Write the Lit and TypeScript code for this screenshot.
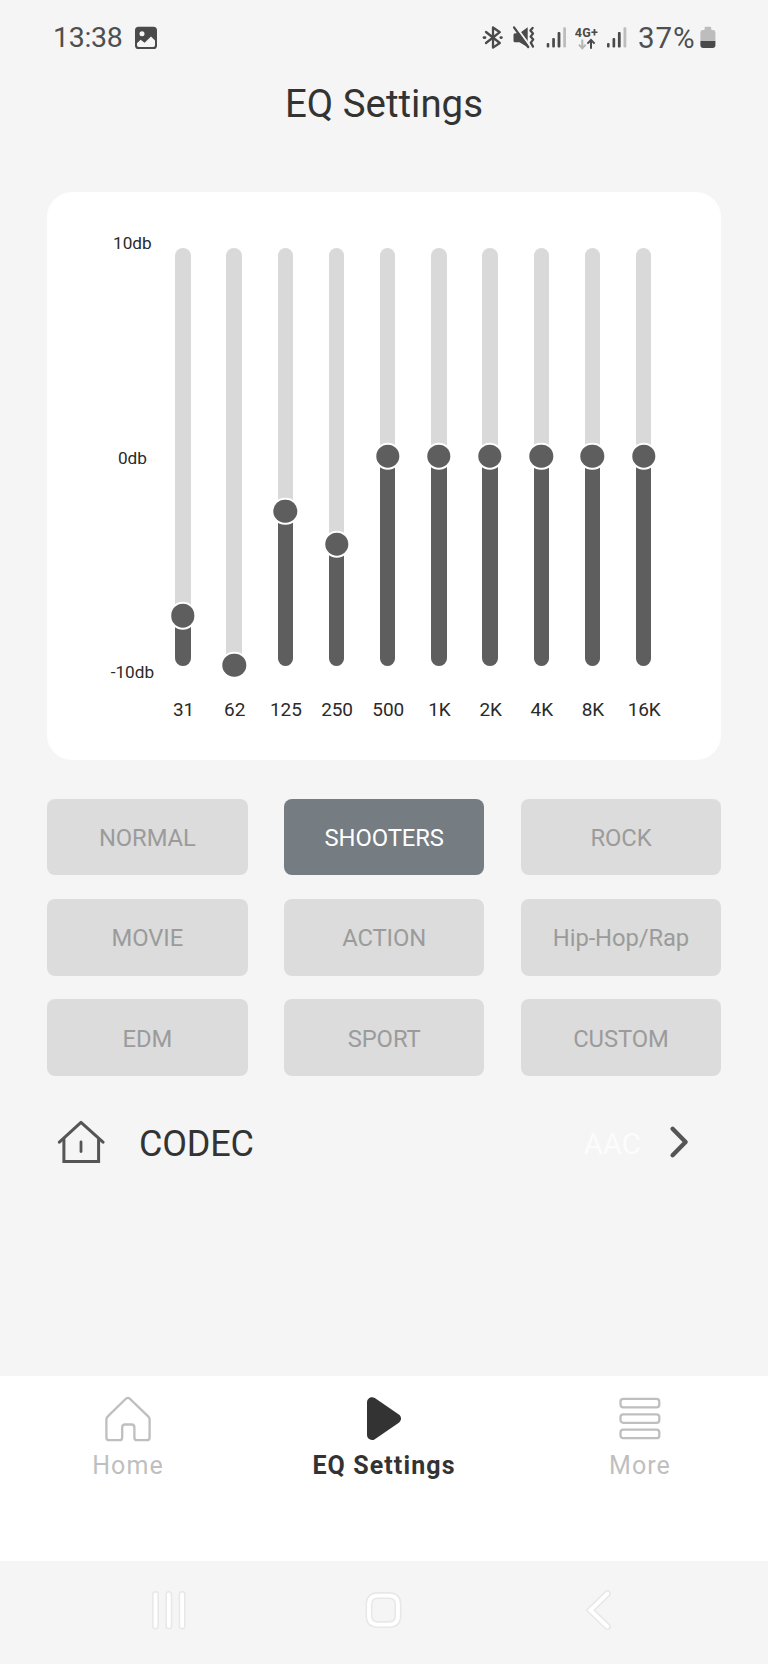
import { LitElement, html, css, svg } from "lit";
import { customElement, property } from "lit/decorators.js";
import { classMap } from "lit/directives/class-map.js";

interface Band {
  label: string;
  /** Share of the track that is filled, in percent. */
  level: number;
}

const BANDS: Band[] = [
  { label: "31", level: 12 },
  { label: "62", level: 0.1 },
  { label: "125", level: 37 },
  { label: "250", level: 29 },
  ...["500", "1K", "2K", "4K", "8K", "16K"].map((label) => ({ label, level: 50.15 })),
];

const PRESETS = ["NORMAL", "SHOOTERS", "ROCK", "MOVIE", "ACTION", "Hip-Hop/Rap", "EDM", "SPORT", "CUSTOM"];

@customElement("status-bar")
export class StatusBar extends LitElement {
  static styles = css`
    :host {
      display: flex;
      align-items: center;
      height: 76px;
      padding: 0 52px 0 53px;
      color: #4f4f4f;
      font-size: 28.5px;
      line-height: 30px;
    }
    .time { width: 82px; letter-spacing: -0.3px; }
    .spacer { flex: 1; }
    .percent { width: 62px; white-space: nowrap; font-size: 29.5px; letter-spacing: 0.9px; }
    svg { display: block; flex: none; }
    .net { font: 700 12.5px Roboto, sans-serif; }
  `;

  private signal(x: number) {
    return html`<svg width=${x ? 30 : 31} height="30" fill="#4a4a4a">
      <rect x=${x} y="20" width="2.6" height="4.6" rx="1"></rect>
      <rect x=${x + 5.5} y="15" width="2.7" height="9.6" rx="1"></rect>
      <rect x=${x + 10.9} y="9" width="2.8" height="15.6" rx="1"></rect>
      <rect x=${x + 16.5} y="4.3" width="2.8" height="20.3" rx="1" fill="#bdbdbd"></rect>
    </svg>`;
  }

  render() {
    return html`
      <span class="time">13:38</span>
      <svg width="22" height="30">
        <rect x="0" y="3.7" width="22" height="22.3" rx="3.6" fill="#4a4a4a"></rect>
        <circle cx="7" cy="10.8" r="2.5" fill="#f5f5f5"></circle>
        <path d="M2 20.2L5.6 16.8L9.6 19.8L16 13.6L20 17.4V22.2Q20 24 18.2 24H3.8Q2 24 2 22.2Z" fill="#f5f5f5"></path>
      </svg>
      <span class="spacer"></span>
      <svg width="31" height="30" fill="none" stroke="#4a4a4a" stroke-width="2.3" stroke-linejoin="round" stroke-linecap="round">
        <path d="M4 9L17.8 20L11 24.6V4.5L17.8 9.2L4 20"></path>
        <path d="M2 14.6h1M18.8 14.6h0.6" stroke-width="2.8"></path>
      </svg>
      <svg width="32" height="30">
        <path d="M0.5 11.8Q0.5 10.3 2 10.3H6.5L14.7 4.3V24.3L6.5 19.2H2Q0.5 19.2 0.5 17.7Z" fill="#4a4a4a"></path>
        <path d="M2.6 3.4L17 22.8" stroke="#f5f5f5" stroke-width="2"></path>
        <path d="M1 4.4L15.2 24" stroke="#4a4a4a" stroke-width="2.3" stroke-linecap="round"></path>
        <path d="M19.6 5l-2.2 2.6 2.6 3-2.4 3 2.6 3-2.4 3 2.2 4" fill="none" stroke="#4a4a4a" stroke-width="2.3" stroke-linecap="round" stroke-linejoin="round"></path>
      </svg>
      ${this.signal(1.7)}
      <svg width="32" height="30">
        <text class="net" x="-0.2" y="13.7" fill="#4a4a4a" textLength="23">4G+</text>
        <path d="M7.3 16.5v8M3.9 21.6l3.4 3.6 3.4-3.6" fill="none" stroke="#b5b5b5" stroke-width="2"></path>
        <path d="M16 25.7v-8.2M12.4 20.6l3.6-3.6 3.6 3.6" fill="none" stroke="#4a4a4a" stroke-width="2"></path>
      </svg>
      ${this.signal(0)}
      <span class="percent">37%</span>
      <svg width="16" height="30">
        <path d="M4.5 7V5.2Q4.5 3.8 6 3.8H9.8Q11.3 3.8 11.3 5.2V7H13Q15.4 7 15.4 9.4V18H0.4V9.4Q0.4 7 2.8 7Z" fill="#bdbdbd"></path>
        <path d="M0.4 18H15.4V22.6Q15.4 25 13 25H2.8Q0.4 25 0.4 22.6Z" fill="#4a4a4a"></path>
      </svg>
    `;
  }
}

@customElement("eq-slider")
export class EqSlider extends LitElement {
  static styles = css`
    :host {
      display: flex;
      flex-direction: column;
      align-items: center;
      width: 51.2px;
    }
    .track {
      position: relative;
      width: 15.4px;
      height: 418.2px;
    }
    .clip {
      display: flex;
      align-items: flex-end;
      width: 100%;
      height: 100%;
      border-radius: 8px;
      overflow: hidden;
      background: #d9d9d9;
    }
    .fill { width: 100%; background: #5e5e5e; }
    .knob {
      position: absolute;
      left: 50%;
      width: 23.4px;
      height: 23.4px;
      border-radius: 50%;
      background: #5e5e5e;
      box-shadow: 0 0 0 2px #fff;
      transform: translate(-50%, 50%);
    }
    .label {
      margin-top: 32px;
      padding-left: 1px;
      color: #2a2a2a;
      font-size: 19px;
      line-height: 24px;
      letter-spacing: -0.1px;
    }
  `;

  @property() label = "";
  @property({ type: Number }) level = 0;

  render() {
    return html`
      <div class="track">
        <div class="clip"><div class="fill" style="height:${this.level}%"></div></div>
        <div class="knob" style="bottom:${this.level}%"></div>
      </div>
      <div class="label">${this.label}</div>
    `;
  }
}

@customElement("app-root")
export class AppRoot extends LitElement {
  static styles = css`
    :host {
      display: flex;
      flex-direction: column;
      box-sizing: border-box;
      width: 768px;
      height: 1664px;
      overflow: hidden;
      background: #f5f5f5;
      font-family: Roboto, sans-serif;
      color: #333;
    }
    .title {
      margin: 0;
      height: 54px;
      font-size: 38.4px;
      font-weight: 400;
      line-height: 56px;
      text-align: center;
    }
    .card {
      display: flex;
      box-sizing: border-box;
      height: 568px;
      margin: 62px 46.7px 0 47px;
      padding-left: 60.4px;
      border-radius: 25px;
      background: #fff;
    }
    .scale {
      display: flex;
      flex-direction: column;
      justify-content: space-between;
      box-sizing: border-box;
      width: 50px;
      height: 490px;
      padding-top: 41px;
      color: #2a2a2a;
      font-size: 17.2px;
      line-height: 20px;
      text-align: center;
    }
    .bands { display: flex; padding-top: 55.5px; }
    .presets {
      display: grid;
      grid-template-columns: repeat(3, 1fr);
      grid-auto-rows: 76.6px;
      gap: 23.7px 36.2px;
      margin: 38.7px 46.7px 0 47px;
    }
    .preset {
      padding: 2px 0 0;
      border: 0;
      border-radius: 8px;
      background: #dcdcdc;
      color: #9b9b9b;
      font: 400 23.8px Roboto, sans-serif;
      letter-spacing: -0.1px;
    }
    .preset.active { background: #757c82; color: #fff; }
    .codec {
      display: flex;
      align-items: center;
      height: 100px;
      margin-top: 16px;
      padding: 0 78px 0 57px;
    }
    .codec-name { flex: 1; padding: 5px 0 0 34px; font-size: 36px; line-height: 40px; letter-spacing: -0.2px; }
    .codec-value { padding-top: 5px; margin-right: 27px; color: #fcfcfc; font-size: 29.4px; line-height: 34px; }
    svg { display: block; flex: none; }
    .tabs {
      display: flex;
      height: 185.3px;
      margin-top: auto;
      background: #fff;
    }
    .tab {
      display: flex;
      flex: 1;
      flex-direction: column;
      align-items: center;
      padding-top: 20px;
      color: #bfbfbf;
    }
    .tab-label { margin-top: 6.5px; font-size: 25px; line-height: 30px; letter-spacing: 1.1px; }
    .tab.active { color: #333; }
    .tab.active .tab-label { font-weight: 700; letter-spacing: 1.1px; }
    .system {
      display: flex;
      justify-content: space-between;
      box-sizing: border-box;
      height: 102.7px;
      padding: 29px 149px 0 148.7px;
    }
    .halo { fill: none; stroke: #e8e8e8; stroke-width: 7; stroke-linecap: round; }
    .core { fill: none; stroke: #fff; stroke-width: 3.8; stroke-linecap: round; }
  `;

  @property() preset = "SHOOTERS";

  private outlined(d: string) {
    return html`<svg width="40" height="40">
      ${svg`<path class="halo" d=${d}></path><path class="core" d=${d}></path>`}
    </svg>`;
  }

  render() {
    return html`
      <status-bar></status-bar>
      <h1 class="title">EQ Settings</h1>

      <section class="card">
        <div class="scale"><span>10db</span><span>0db</span><span>-10db</span></div>
        <div class="bands">
          ${BANDS.map((b) => html`<eq-slider .label=${b.label} .level=${b.level}></eq-slider>`)}
        </div>
      </section>

      <section class="presets">
        ${PRESETS.map(
          (name) => html`<button
            class=${classMap({ preset: true, active: name === this.preset })}
            @click=${() => (this.preset = name)}
          >${name}</button>`,
        )}
      </section>

      <div class="codec">
        <svg width="48" height="46" fill="none" stroke="#555" stroke-width="3" stroke-linecap="round">
          <path d="M2.4 23.2L24 3.4L46 23.2" stroke-linejoin="round"></path>
          <path d="M6.9 20V42.4H41.6V20"></path>
          <path d="M24 23V32.6" stroke-width="2.8"></path>
        </svg>
        <span class="codec-name">CODEC</span>
        <span class="codec-value">AAC</span>
        <svg width="22" height="34" fill="none" stroke="#555" stroke-width="4.4" stroke-linecap="round" stroke-linejoin="round">
          <path d="M4.6 3.8L17.6 17L4.6 30.2"></path>
        </svg>
      </div>

      <nav class="tabs">
        <div class="tab">
          <svg width="48" height="48" fill="none" stroke="#bfbfbf" stroke-width="2.3">
            <path d="M21.8 2.8Q23.9 1 26 2.8L44.4 20.6Q45.6 21.8 45.6 23.4V41.4Q45.6 44.2 42.8 44.2H33.2Q30.4 44.2 30.4 41.4V31.4Q30.4 28.5 27.6 28.5H21Q18.2 28.5 18.2 31.4V41.4Q18.2 44.2 15.4 44.2H5.2Q2.4 44.2 2.4 41.4V23.4Q2.4 21.8 3.6 20.6Z"></path>
          </svg>
          <span class="tab-label">Home</span>
        </div>
        <div class="tab active">
          <svg width="48" height="48" fill="#333" stroke="#333" stroke-width="10" stroke-linejoin="round">
            <path d="M12 6.2V39L36 22.6Z"></path>
          </svg>
          <span class="tab-label">EQ Settings</span>
        </div>
        <div class="tab">
          <svg width="48" height="48" fill="none" stroke="#bfbfbf" stroke-width="2.3">
            <rect x="4.5" y="2.9" width="38.8" height="8.5" rx="2.8"></rect>
            <rect x="4.5" y="18.3" width="38.8" height="8.5" rx="2.8"></rect>
            <rect x="4.5" y="33.7" width="38.8" height="8.5" rx="2.8"></rect>
          </svg>
          <span class="tab-label">More</span>
        </div>
      </nav>

      <div class="system">
        ${this.outlined("M6.5 4.5V36M19.8 4.5V36M33.1 4.5V36")}
        ${this.outlined("M14 5.6H25Q34 5.6 34 14.6V25.6Q34 34.6 25 34.6H14Q5 34.6 5 25.6V14.6Q5 5.6 14 5.6Z")}
        ${this.outlined("M28.4 3.6L11.4 20.2L28.4 36.6")}
      </div>
    `;
  }
}
